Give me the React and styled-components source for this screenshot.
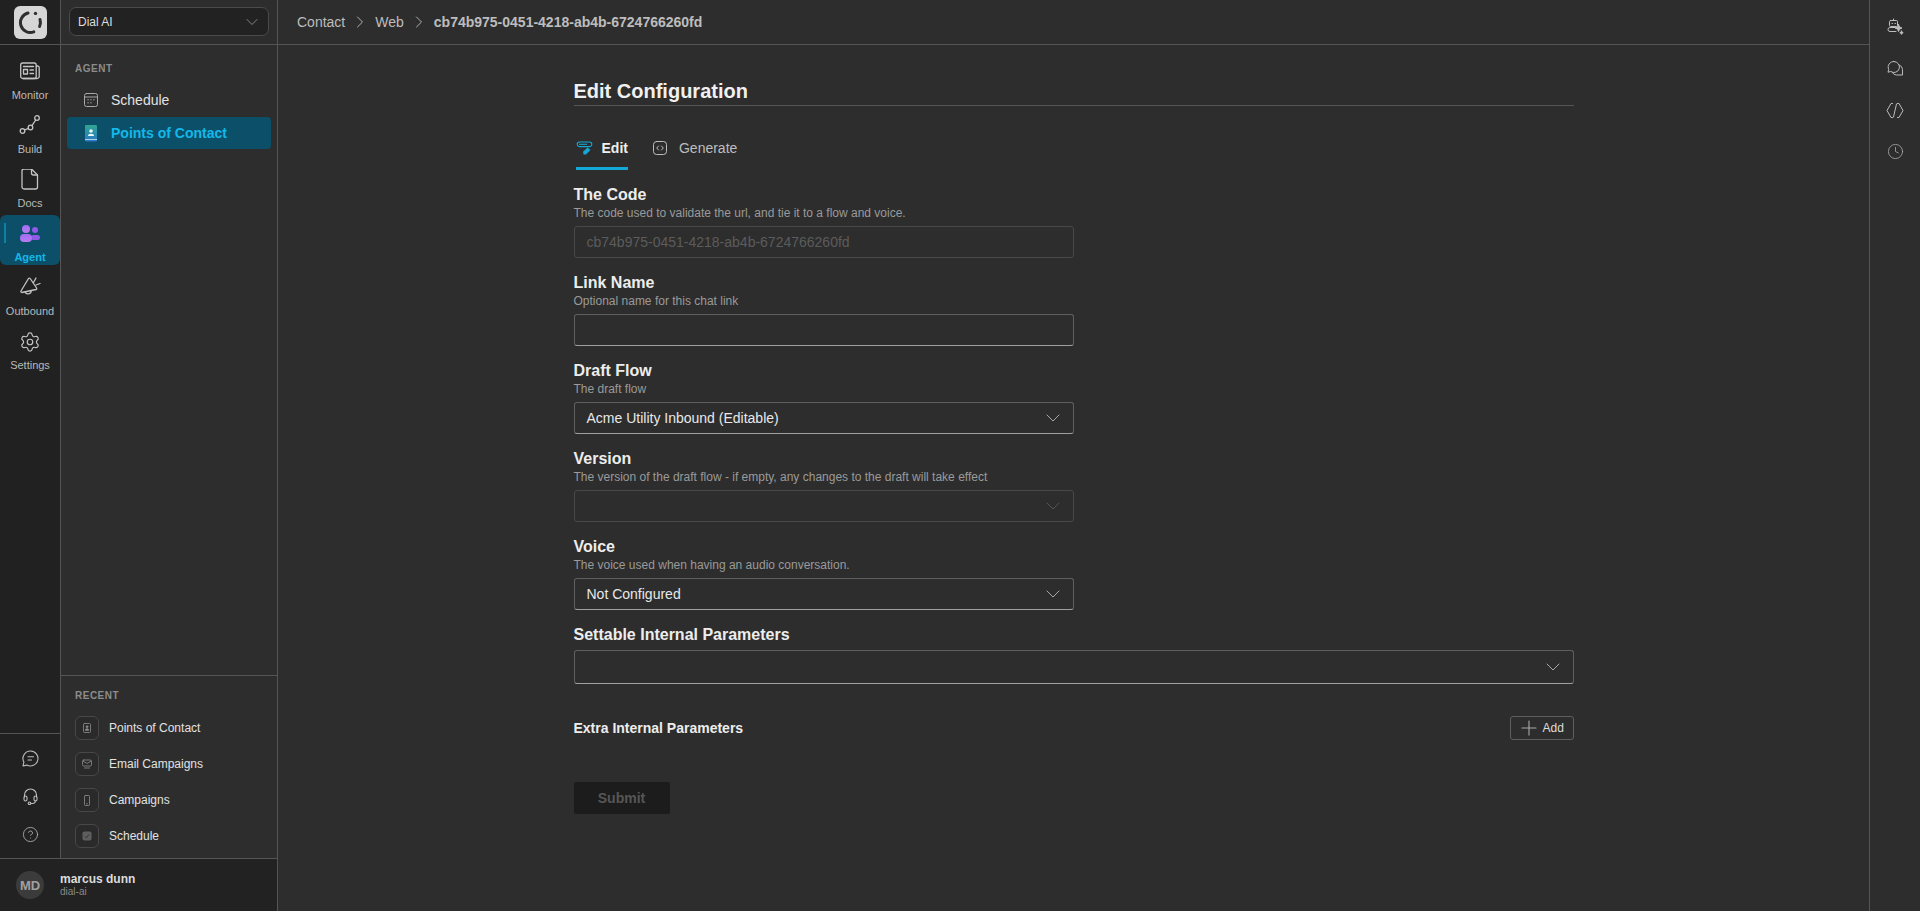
import React from "react";
import styled, { createGlobalStyle } from "styled-components";
import { ChevronDown, ChevronRight, Settings, Clock, CircleHelp, Plus } from "lucide-react";

const GlobalStyle = createGlobalStyle`
  html, body, #root { height: 100%; }
  body {
    margin: 0;
    background: #2d2d2d;
    color: #e8e8e8;
    font-family: "Liberation Sans", Arial, sans-serif;
    overflow: hidden;
  }
  * { box-sizing: border-box; }
`;

const Page = styled.div`
  display: flex;
  width: 100%;
  height: 100vh;
`;

const Sidebar = styled.aside`
  width: 278px;
  flex: none;
  display: flex;
  flex-direction: column;
  border-right: 1px solid #555;
`;

const SidebarTop = styled.div`
  flex: 1;
  min-height: 0;
  display: flex;
`;

const Rail = styled.div`
  width: 61px;
  flex: none;
  display: flex;
  flex-direction: column;
  background: #212121;
  border-right: 1px solid #555;
`;

const LogoBar = styled.div`
  height: 45px;
  flex: none;
  display: flex;
  align-items: center;
  justify-content: center;
  border-bottom: 1px solid #555;
`;

const LogoBox = styled.div`
  width: 33px;
  height: 33px;
  margin-top: 1px;
  border-radius: 6px;
  background: #d6d6d6;
  display: flex;
  align-items: center;
  justify-content: center;
`;

const RailNav = styled.nav`
  flex: 1;
  display: flex;
  flex-direction: column;
  gap: 4px;
  padding-top: 8px;
`;

const RailItem = styled.div`
  position: relative;
  height: 50px;
  width: 60px;
  padding-top: 8px;
  display: flex;
  flex-direction: column;
  align-items: center;
  border-radius: 6px;
  font-size: 11px;
  line-height: 13px;
  color: ${(p) => (p.$active ? "#14b8e8" : "#b9b9b9")};
  font-weight: ${(p) => (p.$active ? 700 : 400)};
  background: ${(p) => (p.$active ? "#0b5068" : "transparent")};
  & > svg { height: 22px; margin-bottom: 6px; flex: none; }
`;

const RailMark = styled.span`
  position: absolute;
  left: 4px;
  top: 8px;
  width: 2px;
  height: 20px;
  background: #0f7fa3;
`;

const RailFoot = styled.div`
  flex: none;
  height: 125px;
  padding: 6px 0 5px;
  border-top: 1px solid #555;
  display: flex;
  flex-direction: column;
`;

const RailFootItem = styled.div`
  height: 38px;
  display: flex;
  align-items: center;
  justify-content: center;
  color: #bdbdbd;
`;

const Panel = styled.div`
  flex: 1;
  min-width: 0;
  display: flex;
  flex-direction: column;
`;

const PanelHead = styled.div`
  height: 45px;
  flex: none;
  padding: 7px 8px 8px 8px;
  border-bottom: 1px solid #555;
`;

const OrgSelect = styled.div`
  height: 29px;
  display: flex;
  align-items: center;
  justify-content: space-between;
  padding: 0 6px 0 8px;
  background: #222;
  border: 1px solid #4a4a4a;
  border-radius: 7px;
  font-size: 12px;
  color: #ddd;
  & > svg { color: #999; }
`;

const PanelBody = styled.div`
  flex: 1;
  padding: 17px 6px 0;
`;

const SectionLabel = styled.div`
  font-size: 10px;
  line-height: 13px;
  font-weight: 700;
  letter-spacing: 0.5px;
  color: #8c8c8c;
  margin-left: ${(p) => p.$inset || 0}px;
`;

const PanelRow = styled.div`
  height: 32px;
  display: flex;
  align-items: center;
  gap: 13px;
  padding-left: 17px;
  margin-bottom: 1px;
  border-radius: 4px;
  font-size: 14px;
  color: ${(p) => (p.$active ? "#14b8e8" : "#e2e2e2")};
  font-weight: ${(p) => (p.$active ? 700 : 400)};
  background: ${(p) => (p.$active ? "#0b5068" : "transparent")};
`;

const PanelRows = styled.div`
  margin-top: 9px;
`;

const Recent = styled.div`
  flex: none;
  height: 183px;
  padding: 13px 14px 0;
  border-top: 1px solid #555;
`;

const RecentList = styled.div`
  margin-top: 14px;
  display: flex;
  flex-direction: column;
  gap: 12px;
`;

const RecentRow = styled.div`
  display: flex;
  align-items: center;
  gap: 10px;
  font-size: 12px;
  color: #e2e2e2;
`;

const RecentIcon = styled.div`
  width: 24px;
  height: 24px;
  display: flex;
  align-items: center;
  justify-content: center;
  border: 1px solid #484848;
  border-radius: 6px;
  background: #2a2a2a;
`;

const UserBar = styled.div`
  height: 53px;
  flex: none;
  display: flex;
  align-items: center;
  gap: 16px;
  padding-left: 16px;
  background: #222;
  border-top: 1px solid #555;
`;

const Avatar = styled.div`
  width: 28px;
  height: 28px;
  border-radius: 50%;
  background: #3b3b3b;
  color: #a0a0a0;
  font-size: 13px;
  font-weight: 700;
  display: flex;
  align-items: center;
  justify-content: center;
`;

const UserText = styled.div`
  margin-bottom: 2px;
`;

const UserName = styled.div`
  font-size: 12px;
  line-height: 14px;
  font-weight: 700;
  color: #dcdcdc;
`;

const UserOrg = styled.div`
  font-size: 10px;
  line-height: 11px;
  color: #8a8a8a;
`;

const Main = styled.main`
  flex: 1;
  min-width: 0;
  display: flex;
  flex-direction: column;
`;

const TopBar = styled.header`
  height: 45px;
  flex: none;
  display: flex;
  align-items: center;
  gap: 5px;
  padding-left: 19px;
  border-bottom: 1px solid #555;
  font-size: 14px;
  color: #bdbdbd;
  & > svg { color: #bdbdbd; }
`;

const Crumb = styled.span`
  font-weight: ${(p) => (p.$current ? 700 : 400)};
`;

const Content = styled.div`
  flex: 1;
  display: flex;
  justify-content: center;
  padding-top: 32px;
`;

const Form = styled.div`
  width: 1000px;
`;

const Title = styled.h1`
  margin: 0;
  height: 29px;
  font-size: 20px;
  line-height: 28px;
  font-weight: 700;
  color: #f0f0f0;
  border-bottom: 1px solid #555;
`;

const Tabs = styled.div`
  display: flex;
  gap: 25px;
  padding-left: 2px;
  margin-top: 20px;
  margin-bottom: 15px;
`;

const Tab = styled.div`
  height: 44px;
  padding-top: 3px;
  display: flex;
  align-items: center;
  gap: ${(p) => (p.$active ? 9 : 12)}px;
  font-size: 14px;
  font-weight: ${(p) => (p.$active ? 700 : 400)};
  color: ${(p) => (p.$active ? "#eee" : "#bdbdbd")};
  border-bottom: 3px solid ${(p) => (p.$active ? "#12a9d6" : "transparent")};
`;

const Field = styled.div`
  margin-bottom: 15px;
`;

const Label = styled.div`
  font-size: 16px;
  line-height: 20px;
  font-weight: 700;
  color: #ededed;
`;

const Hint = styled.div`
  font-size: 12px;
  line-height: 16px;
  color: #9a9a9a;
`;

const Input = styled.input`
  display: block;
  width: 500px;
  height: 32px;
  margin-top: 5px;
  padding: 0 12px;
  background: transparent;
  border: 1px solid ${(p) => (p.disabled ? "#484848" : "#5f5f5f")};
  border-bottom-color: ${(p) => (p.disabled ? "#484848" : "#a0a0a0")};
  border-radius: 3px;
  font-family: inherit;
  font-size: 14px;
  color: #e8e8e8;
  &::placeholder { color: #5c5c5c; }
`;

const SelectBox = styled.div`
  width: ${(p) => (p.$wide ? "100%" : "500px")};
  height: ${(p) => (p.$wide ? 34 : 32)}px;
  margin-top: 5px;
  padding: 0 8px 0 12px;
  display: flex;
  align-items: center;
  justify-content: space-between;
  border: 1px solid ${(p) => (p.$disabled ? "#484848" : "#5f5f5f")};
  border-bottom-color: ${(p) => (p.$disabled ? "#484848" : "#a0a0a0")};
  border-radius: 3px;
  font-size: 14px;
  color: #e8e8e8;
  & > svg { margin-left: auto; color: ${(p) => (p.$disabled ? "#555" : "#a8a8a8")}; }
`;

const ExtraRow = styled.div`
  margin-top: 32px;
  height: 24px;
  display: flex;
  align-items: center;
  justify-content: space-between;
`;

const ExtraLabel = styled.div`
  font-size: 14px;
  font-weight: 700;
  color: #ededed;
`;

const AddButton = styled.button`
  width: 64px;
  height: 24px;
  padding: 0 0 0 6px;
  display: flex;
  align-items: center;
  gap: 2px;
  background: transparent;
  border: 1px solid #5f5f5f;
  border-radius: 3px;
  font-family: inherit;
  font-size: 12px;
  color: #ddd;
  & > svg { color: #aaa; flex: none; }
`;

const SubmitButton = styled.button`
  display: block;
  width: 96px;
  height: 32px;
  margin-top: 42px;
  padding: 0;
  background: #1c1c1c;
  border: 0;
  border-radius: 2px;
  font-family: inherit;
  font-size: 14px;
  font-weight: 700;
  color: #565656;
`;

const RightRail = styled.aside`
  width: 51px;
  flex: none;
  padding-top: 6px;
  display: flex;
  flex-direction: column;
  border-left: 1px solid #555;
`;

const RightItem = styled.div`
  height: 41.7px;
  display: flex;
  align-items: center;
  justify-content: center;
  color: #bdbdbd;
`;

const line = {
  fill: "none",
  stroke: "currentColor",
  strokeWidth: 1.5,
  strokeLinecap: "round",
  strokeLinejoin: "round",
};

const Logo = () => (
  <svg width="25" height="25" viewBox="0 0 25 25" fill="none" stroke="#2e2e2e" strokeWidth="3" strokeLinecap="round">
    <path d="M10 3 A9.9 9.9 0 1 0 15.8 21.9" />
    <circle cx="17.5" cy="3.4" r="1.7" fill="#2e2e2e" stroke="none" />
    <path d="M22 9.5 A9.9 9.9 0 0 1 21.6 16.5" />
  </svg>
);

const MonitorIcon = () => (
  <svg width="20" viewBox="0 1 20 22" {...line} strokeWidth="1.3" color="#c4c4c4">
    <rect x="0.7" y="3" width="15.5" height="15.5" rx="2" />
    <path d="M16.2 6 h1.2 a1.8 1.8 0 0 1 1.8 1.8 v8.6 a2.1 2.1 0 0 1 -2.1 2.1 h-14" />
    <path d="M3.5 6.5 h10" />
    <rect x="3.5" y="9.5" width="4" height="4.5" />
    <path d="M10 10 h3.5 M10 13.5 h3.5" />
  </svg>
);

const BuildIcon = () => (
  <svg width="22" viewBox="0 1 22 22" {...line} strokeWidth="1.3" color="#c4c4c4">
    <circle cx="3.5" cy="17" r="2.3" />
    <circle cx="11.5" cy="13.5" r="2.3" />
    <circle cx="18" cy="4" r="2.3" />
    <path d="M5.6 16 L9.4 14.4 M13 11.7 L16.7 6" />
  </svg>
);

const DocsIcon = () => (
  <svg width="18" viewBox="0 1 18 22" {...line} strokeWidth="1.3" color="#c4c4c4">
    <path d="M3 1 h7.5 l6 6 v12 a2 2 0 0 1 -2 2 H3 a2 2 0 0 1 -2 -2 V3 a2 2 0 0 1 2 -2 z" />
    <path d="M10.5 1 v4 a2 2 0 0 0 2 2 h4" />
  </svg>
);

const AgentIcon = () => (
  <svg width="22" viewBox="0 0 22 22">
    <defs>
      <linearGradient id="agentFill" x1="0" y1="0" x2="0" y2="1">
        <stop offset="0" stopColor="#a46bf5" />
        <stop offset="1" stopColor="#b57cf0" />
      </linearGradient>
    </defs>
    <circle cx="16" cy="7" r="3" fill="#8f5be8" />
    <rect x="12" y="12" width="9" height="5" rx="2.5" fill="#8f5be8" />
    <circle cx="7" cy="6" r="4" fill="url(#agentFill)" />
    <rect x="1" y="11" width="12" height="8" rx="4" fill="url(#agentFill)" />
  </svg>
);

const OutboundIcon = () => (
  <svg width="22" viewBox="0 0 22 22" {...line} strokeWidth="1.3" color="#c4c4c4">
    <path d="M9.5 1.5 L2 14 a1 1 0 0 0 .9 1.5 L17 12.5 a1 1 0 0 0 .6 -1.5 L11.2 1.5 a1 1 0 0 0 -1.7 0 z" />
    <path d="M6 14.8 a3.2 3.2 0 0 0 6.2 -1.1" />
    <path d="M14.5 5.5 L17 1 M17 8 L21 6.5" />
  </svg>
);

const CalendarIcon = () => (
  <svg width="14" height="14" viewBox="0 0 14 14" {...line} strokeWidth="1" color="#a8a8a8">
    <rect x="0.5" y="0.5" width="13" height="13" rx="2" />
    <path d="M0.5 4 h13" />
    <path d="M3.8 6.8 h.6 M6.7 6.8 h.6 M9.6 6.8 h.6 M3.8 9.8 h.6 M6.7 9.8 h.6" />
  </svg>
);

const ContactIcon = () => (
  <svg width="14" height="17" viewBox="0 0 14 17">
    <defs>
      <linearGradient id="contactFill" x1="0" y1="0" x2="0" y2="1">
        <stop offset="0" stopColor="#2fa78f" />
        <stop offset="1" stopColor="#2a77c9" />
      </linearGradient>
    </defs>
    <rect x="1" y="0" width="12" height="16.5" rx="1.2" fill="url(#contactFill)" />
    <circle cx="7" cy="6" r="1.8" fill="#e8f6f4" />
    <path d="M4 11 a3 2.2 0 0 1 6 0 z" fill="#e8f6f4" />
    <path d="M1 14.5 h12" stroke="#cfe6f5" strokeWidth="0.8" />
  </svg>
);

const SmallContact = () => (
  <svg width="8" height="10" viewBox="0 0 8 10" {...line} strokeWidth="0.8" color="#8e8e8e">
    <rect x="0.5" y="0.5" width="7" height="9" rx="1" />
    <circle cx="4" cy="3.7" r="0.9" fill="currentColor" />
    <path d="M2.4 7 a1.6 1.3 0 0 1 3.2 0 z" fill="currentColor" />
  </svg>
);

const SmallMail = () => (
  <svg width="10" height="10" viewBox="0 0 10 10" {...line} strokeWidth="0.8" color="#8e8e8e">
    <rect x="0.5" y="1" width="9" height="6" rx="1.3" />
    <path d="M1 2.2 L5 4.4 L9 2.2" />
    <path d="M2.5 9 h5" />
  </svg>
);

const SmallPhone = () => (
  <svg width="6" height="11" viewBox="0 0 6 11" {...line} strokeWidth="0.8" color="#8e8e8e">
    <rect x="0.5" y="0.5" width="5" height="10" rx="0.8" />
    <path d="M2.6 8.8 h.8" />
  </svg>
);

const SmallSchedule = () => (
  <svg width="10" height="10" viewBox="0 0 10 10">
    <rect x="0.5" y="0.5" width="9" height="9" rx="1.8" fill="#5e5e5e" />
    <path d="M3 5.5 L4.3 6.8 L7 3.5" fill="none" stroke="#2e2e2e" strokeWidth="0.9" />
  </svg>
);

const ChatLinesIcon = () => (
  <svg width="17" height="17" viewBox="0 0 17 17" {...line} strokeWidth="1.1">
    <path d="M8.5 1 a7.5 7.5 0 1 1 -3.6 14.1 L1 16 l.9 -3.9 A7.5 7.5 0 0 1 8.5 1 z" />
    <path d="M6 6.7 h5.5 M6 10 h3.5" />
  </svg>
);

const HeadsetIcon = () => (
  <svg width="17" height="17" viewBox="0 0 17 17" {...line} strokeWidth="1.1">
    <path d="M2.5 9 V7 a6 6 0 0 1 12 0 v2" />
    <rect x="2" y="8" width="3" height="5" rx="1.5" />
    <rect x="12" y="8" width="3" height="5" rx="1.5" />
    <path d="M13.5 13 a3 3 0 0 1 -3 2.5 H9" />
    <circle cx="7.5" cy="15.3" r="1.3" />
  </svg>
);

const BotIcon = () => (
  <svg width="18" height="18" viewBox="0 0 18 18" {...line} strokeWidth="1">
    <rect x="3.5" y="2.5" width="8" height="6" rx="1" />
    <path d="M7.5 1 v1.5 M6 5.5 h.5 M9 5.5 h.5" />
    <path d="M9 9.5 H4 a2 2 0 0 0 0 4 h6" />
    <path d="M12.5 6.5 l1 2.5 l2.5 1 l-2.5 1 l-1 2.5 l-1 -2.5 l-2.5 -1 l2.5 -1 z" fill="currentColor" />
    <path d="M15.5 13 l.5 1.2 l1.2 .5 l-1.2 .5 l-.5 1.2 l-.5 -1.2 l-1.2 -.5 l1.2 -.5 z" fill="currentColor" />
  </svg>
);

const ChatsIcon = () => (
  <svg width="17" height="17" viewBox="0 0 17 17" {...line} strokeWidth="1">
    <path d="M7 1.5 a5.5 5.5 0 1 1 -3.2 10 L1 12.2 l.7 -2.8 A5.5 5.5 0 0 1 7 1.5 z" />
    <path d="M12.4 5 A5 5 0 0 1 15.5 9.5 V15 H9.5 A5 5 0 0 1 5.5 12.8" />
  </svg>
);

const CodeHexIcon = () => (
  <svg width="18" height="17" viewBox="0 0 18 17" {...line} strokeWidth="1">
    <path d="M6.5 1.5 H5 L1 8.5 L5 15.5 H6.5" />
    <path d="M11.5 1.5 H13 L17 8.5 L13 15.5 H11.5" />
    <path d="M10.5 2 L7.5 15" />
  </svg>
);

const PenTabIcon = () => (
  <svg width="17" height="15" viewBox="0 0 17 15" fill="none">
    <path d="M4 1 H13.5 A2.3 2.3 0 0 1 13.5 5.6 H3.5 A2.3 2.3 0 0 1 3.5 1 z" stroke="#12a9d6" strokeWidth="1.1" />
    <path d="M3 3.3 H11" stroke="#12a9d6" strokeWidth="1" />
    <path d="M7.5 13.5 L7 10.8 L11.5 6.5 L14.5 9 L10 13.5 z" fill="#12a9d6" />
  </svg>
);

const CodeTabIcon = () => (
  <svg width="14" height="14" viewBox="0 0 14 14" {...line} strokeWidth="1" color="#bdbdbd">
    <rect x="0.5" y="0.5" width="13" height="13" rx="3" />
    <path d="M5.5 5 L3.7 7 L5.5 9 M8.5 5 L10.3 7 L8.5 9" />
  </svg>
);

const Chevron = ({ size = 24 }) => <ChevronDown size={size} strokeWidth={1} />;

const railItems = [
  { label: "Monitor", icon: <MonitorIcon /> },
  { label: "Build", icon: <BuildIcon /> },
  { label: "Docs", icon: <DocsIcon /> },
  { label: "Agent", icon: <AgentIcon />, active: true },
  { label: "Outbound", icon: <OutboundIcon /> },
  { label: "Settings", icon: <Settings size={22} strokeWidth={1.3} color="#c4c4c4" /> },
];

const recentItems = [
  { label: "Points of Contact", icon: <SmallContact /> },
  { label: "Email Campaigns", icon: <SmallMail /> },
  { label: "Campaigns", icon: <SmallPhone /> },
  { label: "Schedule", icon: <SmallSchedule /> },
];

const App = () => {
  return (
    <Page>
      <GlobalStyle />
      <Sidebar>
        <SidebarTop>
          <Rail>
            <LogoBar>
              <LogoBox><Logo /></LogoBox>
            </LogoBar>
            <RailNav>
              {railItems.map((item) => (
                <RailItem key={item.label} $active={item.active}>
                  {item.active && <RailMark />}
                  {item.icon}
                  {item.label}
                </RailItem>
              ))}
            </RailNav>
            <RailFoot>
              <RailFootItem><ChatLinesIcon /></RailFootItem>
              <RailFootItem><HeadsetIcon /></RailFootItem>
              <RailFootItem><CircleHelp size={17} strokeWidth={1.1} /></RailFootItem>
            </RailFoot>
          </Rail>
          <Panel>
            <PanelHead>
              <OrgSelect>
                Dial AI
                <Chevron size={20} />
              </OrgSelect>
            </PanelHead>
            <PanelBody>
              <SectionLabel $inset={8}>AGENT</SectionLabel>
              <PanelRows>
                <PanelRow><CalendarIcon />Schedule</PanelRow>
                <PanelRow $active><ContactIcon />Points of Contact</PanelRow>
              </PanelRows>
            </PanelBody>
            <Recent>
              <SectionLabel>RECENT</SectionLabel>
              <RecentList>
                {recentItems.map((item) => (
                  <RecentRow key={item.label}>
                    <RecentIcon>{item.icon}</RecentIcon>
                    {item.label}
                  </RecentRow>
                ))}
              </RecentList>
            </Recent>
          </Panel>
        </SidebarTop>
        <UserBar>
          <Avatar>MD</Avatar>
          <UserText>
            <UserName>marcus dunn</UserName>
            <UserOrg>dial-ai</UserOrg>
          </UserText>
        </UserBar>
      </Sidebar>

      <Main>
        <TopBar>
          <Crumb>Contact</Crumb>
          <ChevronRight size={20} strokeWidth={1.1} />
          <Crumb>Web</Crumb>
          <ChevronRight size={20} strokeWidth={1.1} />
          <Crumb $current>cb74b975-0451-4218-ab4b-6724766260fd</Crumb>
        </TopBar>
        <Content>
          <Form>
            <Title>Edit Configuration</Title>
            <Tabs>
              <Tab $active><PenTabIcon />Edit</Tab>
              <Tab><CodeTabIcon />Generate</Tab>
            </Tabs>
            <Field>
              <Label>The Code</Label>
              <Hint>The code used to validate the url, and tie it to a flow and voice.</Hint>
              <Input disabled placeholder="cb74b975-0451-4218-ab4b-6724766260fd" />
            </Field>
            <Field>
              <Label>Link Name</Label>
              <Hint>Optional name for this chat link</Hint>
              <Input />
            </Field>
            <Field>
              <Label>Draft Flow</Label>
              <Hint>The draft flow</Hint>
              <SelectBox>Acme Utility Inbound (Editable)<Chevron /></SelectBox>
            </Field>
            <Field>
              <Label>Version</Label>
              <Hint>The version of the draft flow - if empty, any changes to the draft will take effect</Hint>
              <SelectBox $disabled><Chevron /></SelectBox>
            </Field>
            <Field>
              <Label>Voice</Label>
              <Hint>The voice used when having an audio conversation.</Hint>
              <SelectBox>Not Configured<Chevron /></SelectBox>
            </Field>
            <Label>Settable Internal Parameters</Label>
            <SelectBox $wide><Chevron /></SelectBox>
            <ExtraRow>
              <ExtraLabel>Extra Internal Parameters</ExtraLabel>
              <AddButton type="button"><Plus size={24} strokeWidth={1.1} />Add</AddButton>
            </ExtraRow>
            <SubmitButton type="button" disabled>Submit</SubmitButton>
          </Form>
        </Content>
      </Main>

      <RightRail>
        <RightItem><BotIcon /></RightItem>
        <RightItem><ChatsIcon /></RightItem>
        <RightItem><CodeHexIcon /></RightItem>
        <RightItem><Clock size={17} strokeWidth={1} /></RightItem>
      </RightRail>
    </Page>
  );
};

export default App;
